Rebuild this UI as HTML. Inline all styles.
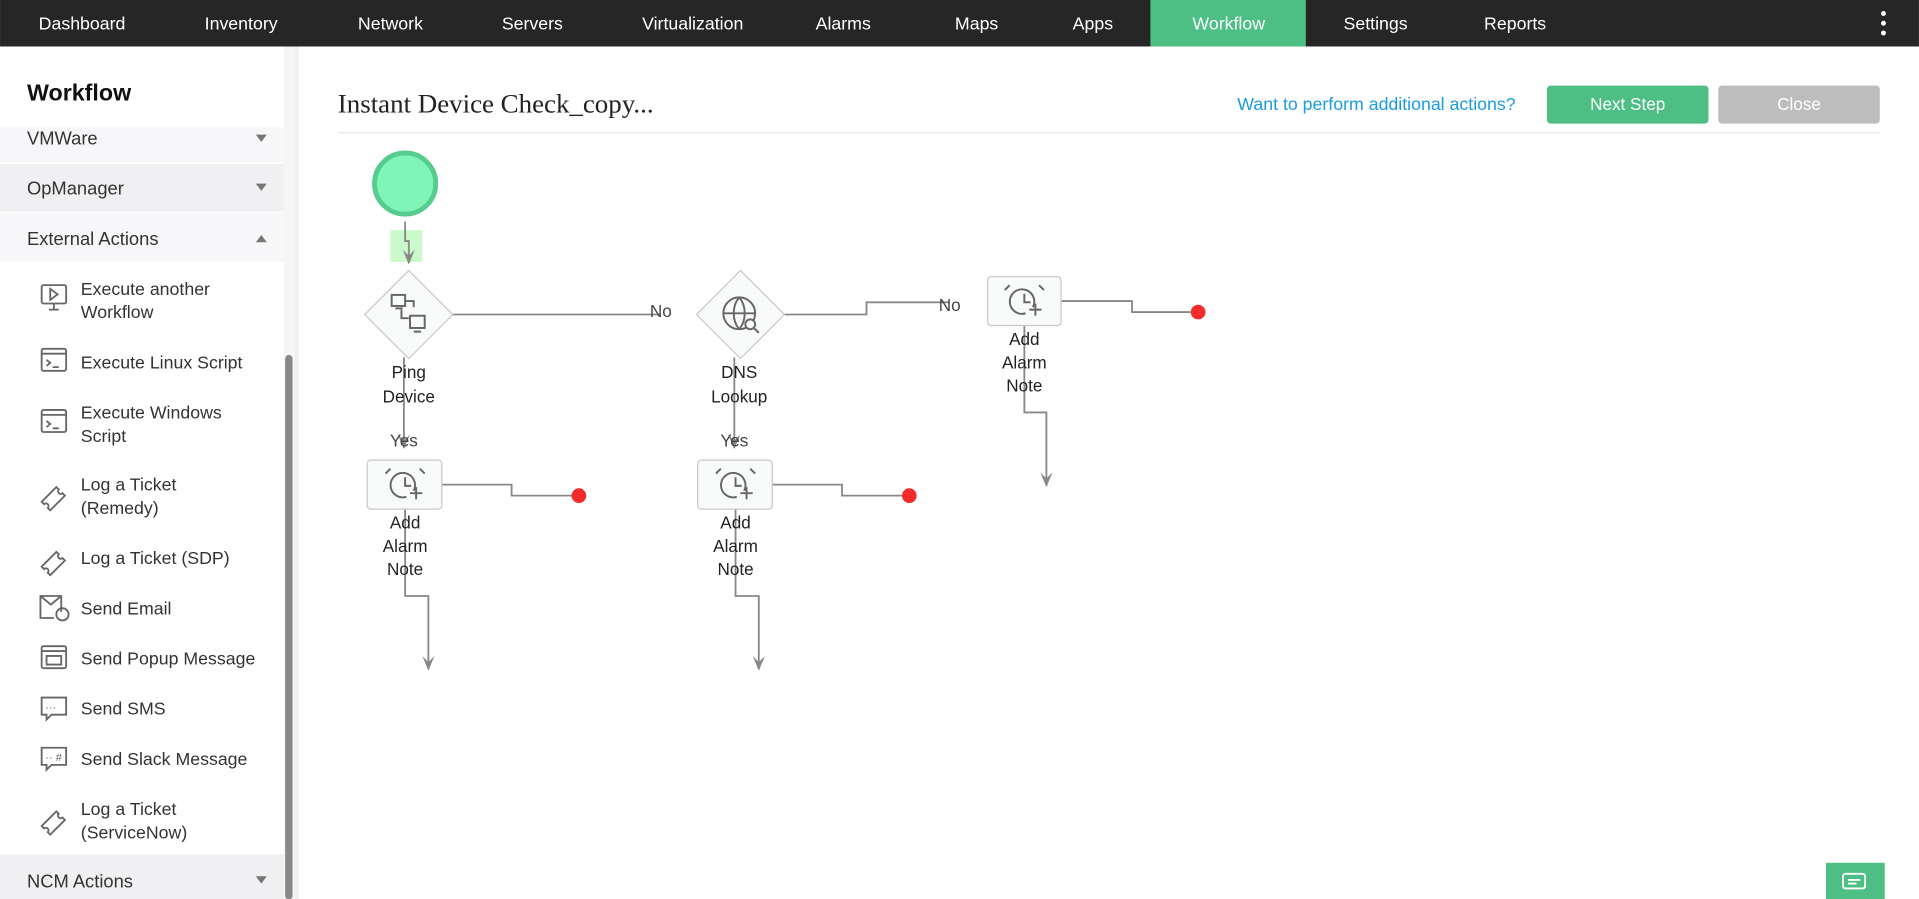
<!DOCTYPE html>
<html><head><meta charset="utf-8"><style>
html,body{margin:0;padding:0;width:1919px;height:899px;overflow:hidden;background:#fff}
svg{display:block}
text{font-family:"Liberation Sans",sans-serif}
</style></head><body>
<svg width="1919" height="899" viewBox="0 0 1568 734.6" xmlns="http://www.w3.org/2000/svg">
<defs>
<marker id="ar" viewBox="0 0 12 10" refX="11" refY="5" markerWidth="12" markerHeight="10" orient="auto" markerUnits="userSpaceOnUse"><path d="M0 0 L12 5 L0 10 L5 5 Z" fill="#888"/></marker>
</defs>
<!-- nav -->
<rect x="0" y="0" width="1568" height="38" fill="#262626"/>
<rect x="940" y="0" width="127" height="38" fill="#4dbf84"/>
<g fill="#fff" font-size="14.5" text-anchor="middle">
<text x="67" y="24">Dashboard</text><text x="197" y="24">Inventory</text><text x="319" y="24">Network</text><text x="435" y="24">Servers</text><text x="566" y="24">Virtualization</text><text x="689" y="24">Alarms</text><text x="798" y="24">Maps</text><text x="893" y="24">Apps</text><text x="1004" y="24">Workflow</text><text x="1124" y="24">Settings</text><text x="1238" y="24">Reports</text>
</g>
<g fill="#fff"><circle cx="1539" cy="11" r="2"/><circle cx="1539" cy="19" r="2"/><circle cx="1539" cy="27" r="2"/></g>
<!-- sidebar -->
<rect x="241" y="38" width="3" height="697" fill="#eef0f2"/>
<text x="22" y="82" font-size="19" fill="#111" font-weight="bold">Workflow</text>
<rect x="0" y="104" width="232" height="29" fill="#f7f7f9"/>
<rect x="0" y="134" width="232" height="39" fill="#f0f0f2"/>
<rect x="0" y="174" width="232" height="40" fill="#f7f7f9"/>
<rect x="0" y="698" width="232" height="37" fill="#f0f0f2"/>
<g font-size="15" fill="#333">
<text x="22" y="118">VMWare</text><text x="22" y="159">OpManager</text><text x="22" y="200">External Actions</text><text x="22" y="725">NCM Actions</text>
</g>
<g fill="#777"><path d="M209 110h9l-4.5 6z"/><path d="M209 150h9l-4.5 6z"/><path d="M209 198h9l-4.5-6z"/><path d="M209 716h9l-4.5 6z"/></g>
<rect x="232" y="38" width="9" height="697" fill="#f5f5f5"/>
<rect x="233" y="290" width="6" height="445" rx="3" fill="#888"/>
<g font-size="14.5" fill="#333">
<text x="66" y="241">Execute another</text><text x="66" y="260">Workflow</text>
<text x="66" y="301">Execute Linux Script</text>
<text x="66" y="342">Execute Windows</text><text x="66" y="361">Script</text>
<text x="66" y="401">Log a Ticket</text><text x="66" y="420">(Remedy)</text>
<text x="66" y="461">Log a Ticket (SDP)</text>
<text x="66" y="502">Send Email</text>
<text x="66" y="543">Send Popup Message</text>
<text x="66" y="584">Send SMS</text>
<text x="66" y="625">Send Slack Message</text>
<text x="66" y="666">Log a Ticket</text><text x="66" y="685">(ServiceNow)</text>
</g>
<g fill="none" stroke="#666" stroke-width="1.5">
<rect x="34" y="233" width="20" height="15" rx="1.5"/><path d="M40 253h8M44 248v5M41 236v9l6-4.5z"/>
<rect x="34" y="285" width="20" height="18" rx="1.5"/><path d="M34 289h20M38 294l3 2.5-3 2.5M43 300h5"/>
<rect x="34" y="335" width="20" height="18" rx="1.5"/><path d="M34 339h20M38 344l3 2.5-3 2.5M43 350h5"/>
<path d="M34 410l12-12 2 2a2 2 0 0 0 3 3l2 2-12 12-2-2a2 2 0 0 0-3-3z"/>
<path d="M34 463l12-12 2 2a2 2 0 0 0 3 3l2 2-12 12-2-2a2 2 0 0 0-3-3z"/>
<path d="M50 500v-13h-17v18h11M33 487l8.5 7 8.5-7"/><circle cx="51" cy="502" r="5"/>
<rect x="34" y="528" width="20" height="18" rx="1.5"/><path d="M34 532h20M38 536h12v7h-12z"/>
<path d="M34 570h20v14h-12l-4 4v-4h-4z"/>
<path d="M34 611h20v14h-12l-4 4v-4h-4z"/>
<path d="M34 675l12-12 2 2a2 2 0 0 0 3 3l2 2-12 12-2-2a2 2 0 0 0-3-3z"/>
</g>
<g fill="#666" font-size="9"><text x="37" y="581">···</text><text x="37" y="622">·· #</text></g>
<!-- main header -->
<text x="276" y="92" font-size="22" fill="#222" style="font-family:'Liberation Serif',serif">Instant Device Check_copy...</text>
<rect x="276" y="108" width="1260" height="1" fill="#e8e8e8"/>
<text x="1011" y="90" font-size="14.5" fill="#1a9ce0">Want to perform additional actions?</text>
<rect x="1264" y="70" width="132" height="31" rx="3" fill="#4dbf84"/>
<text x="1330" y="90" font-size="14" fill="#fff" text-anchor="middle">Next Step</text>
<rect x="1404" y="70" width="132" height="31" rx="3" fill="#bdbdbd"/>
<text x="1470" y="90" font-size="14" fill="#fff" text-anchor="middle">Close</text>
<!-- diagram -->
<circle cx="331" cy="150" r="25" fill="#80f5b8" stroke="#56cc8f" stroke-width="4"/>
<rect x="319" y="188" width="26" height="26" fill="#ccf9cc"/>
<g fill="none" stroke="#888" stroke-width="1.5">
<path d="M331 181v16h3v18" marker-end="url(#ar)"/>
<path d="M370 257h170"/>
<path d="M641 257h67v-10h68"/>
<path d="M867 246h58v9h48"/>
<path d="M837 266v71h18v60" marker-end="url(#ar)"/>
<path d="M330 292v74" marker-end="url(#ar)"/>
<path d="M600 292v74" marker-end="url(#ar)"/>
<path d="M361 396h57v9h50"/>
<path d="M631 396h57v9h50"/>
<path d="M331 416v71h19v60" marker-end="url(#ar)"/>
<path d="M601 416v71h19v60" marker-end="url(#ar)"/>
</g>
<g fill="#f8fbfa" stroke="#c8c8c8" stroke-width="1">
<path d="M334 221l36 36-36 36-36-36z"/>
<path d="M605 221l36 36-36 36-36-36z"/>
<rect x="807" y="226" width="60" height="40" rx="3"/>
<rect x="300" y="376" width="61" height="40" rx="3"/>
<rect x="570" y="376" width="61" height="40" rx="3"/>
</g>
<g fill="#f22b2b"><circle cx="979" cy="255" r="6"/><circle cx="473" cy="405" r="6"/><circle cx="743" cy="405" r="6"/></g>
<g fill="none" stroke="#666" stroke-width="1.6">
<rect x="320" y="241" width="11" height="9"/><path d="M323 252h6"/><rect x="335" y="258" width="12" height="10"/><path d="M338 271h6M331 246h7v5M328 253v7h6"/>
<circle cx="604" cy="256" r="13"/><path d="M591 256h26M604 243c-6 7-6 19 0 26M604 243c6 7 6 19 0 26"/><circle cx="613" cy="265" r="4" fill="#f8fbfa"/><path d="M616 268l4 4"/>
</g>
<g fill="none" stroke="#666" stroke-width="1.6">
<path id="al" d="M844 251a10 10 0 1 0-6 5M837 240v7h5M846 248v10M841 253h10M825 233l-4 4M849 233l4 4"/>
<use href="#al" x="-506" y="150"/><use href="#al" x="-236" y="150"/>
</g>
<g font-size="14" fill="#222" text-anchor="middle">
<text x="334" y="309">Ping</text><text x="334" y="329">Device</text>
<text x="604" y="309">DNS</text><text x="604" y="329">Lookup</text>
<text x="837" y="282">Add</text><text x="837" y="301">Alarm</text><text x="837" y="320">Note</text>
<text x="331" y="432">Add</text><text x="331" y="451">Alarm</text><text x="331" y="470">Note</text>
<text x="601" y="432">Add</text><text x="601" y="451">Alarm</text><text x="601" y="470">Note</text>
</g>
<g font-size="14" fill="#444" text-anchor="middle">
<text x="540" y="259">No</text><text x="776" y="254">No</text><text x="330" y="365">Yes</text><text x="600" y="365">Yes</text>
</g>
<!-- chat -->
<rect x="1492" y="705" width="48" height="30" fill="#4dbf84"/>
<g fill="none" stroke="#fff" stroke-width="1.5"><rect x="1506" y="714" width="18" height="12" rx="2"/><path d="M1510 719h10M1510 722h7"/></g>
</svg>
</body></html>
